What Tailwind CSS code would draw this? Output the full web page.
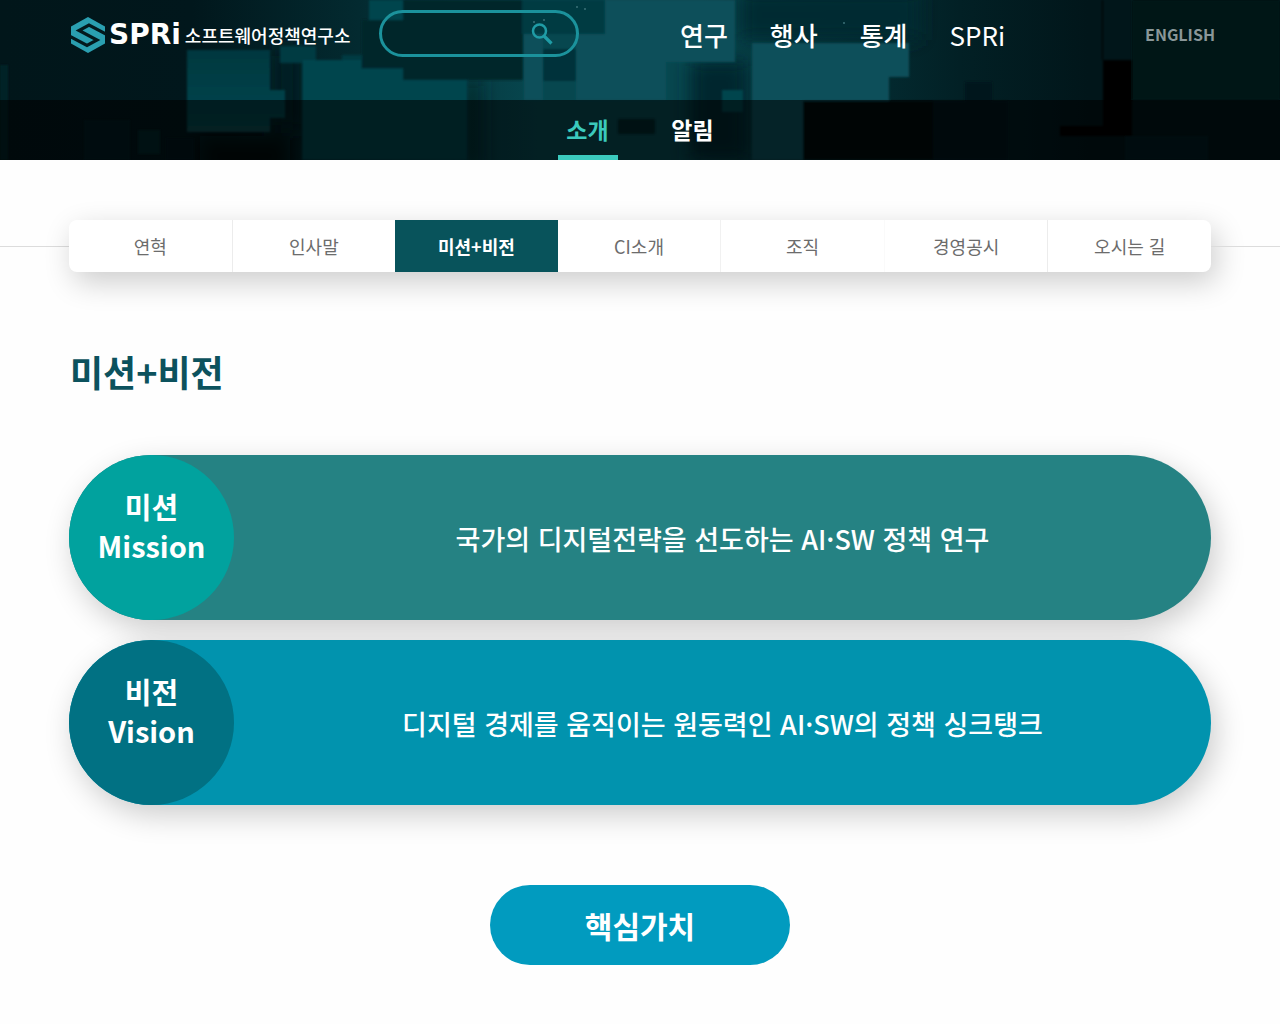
<!DOCTYPE html>
<html lang="ko">
<head>
<meta charset="utf-8">
<meta name="viewport" content="width=device-width, initial-scale=1">
<title>미션+비전 - SPRi 소프트웨어정책연구소</title>
<script src="https://cdn.jsdelivr.net/npm/@tailwindcss/browser@4"></script>
</head>
<body class="min-h-screen bg-[#fefefe] font-['Noto_Sans_CJK_KR',sans-serif]">
<header class="relative isolate overflow-hidden bg-[#02171b] text-white">
  <!-- Header artwork: overlapping blocks -->
  <svg class="absolute inset-0 -z-10 h-full w-full" viewBox="0 0 1280 160" preserveAspectRatio="xMidYMin slice" aria-hidden="true">
    <defs>
      <linearGradient id="base" x1="0" x2="1" y1="0" y2="0">
        <stop offset="0" stop-color="#01161a"/><stop offset=".15" stop-color="#01171c"/><stop offset=".28" stop-color="#032a30"/>
        <stop offset=".42" stop-color="#07474f"/><stop offset=".55" stop-color="#07474f"/><stop offset=".62" stop-color="#04343b"/>
        <stop offset=".75" stop-color="#022025"/><stop offset=".85" stop-color="#01161a"/><stop offset="1" stop-color="#01161a"/>
      </linearGradient>
      <linearGradient id="block" x1="0" x2="0" y1="0" y2="1">
        <stop offset="0" stop-color="#03383f"/><stop offset="1" stop-color="#07474f"/>
      </linearGradient>
      <filter id="soft"><feGaussianBlur stdDeviation="9"/></filter>
      <filter id="edge"><feGaussianBlur stdDeviation="1"/></filter>
    </defs>
    <rect width="1280" height="160" fill="url(#base)"/>
    <g filter="url(#soft)">
      <rect x="272" y="50" width="30" height="80" fill="#021d22"/>
      <rect x="200" y="136" width="90" height="40" fill="#000708"/>
      <rect x="466" y="80" width="14" height="90" fill="#03252b"/>
      <rect x="690" y="60" width="58" height="100" fill="#03282e"/>
      <rect x="740" y="-10" width="180" height="50" fill="#032b31"/>
    </g>
    <g filter="url(#edge)">
    <rect x="0" y="65" width="8" height="95" fill="#022126"/>
    <rect x="84" y="120" width="46" height="40" fill="#021d21"/>
    <rect x="138" y="130" width="22" height="24" fill="#03282c"/>
    <rect x="166" y="138" width="28" height="22" fill="#02191d"/>
    <path d="M187 50h83v40h15v28h-15v14h-83z" fill="url(#block)"/>
    <path d="M280 46h36v14h26v-5h20v13h22v-10h20v14h-42v88h-60v-97h-22z" fill="#043b43"/>
    <path d="M303 60h58v9h106v91H303z" fill="#06444d"/>
    <rect x="369" y="0" width="34" height="20" fill="#06444d"/>
    <rect x="362" y="20" width="42" height="48" fill="#03252b"/>
    <rect x="403" y="0" width="120" height="80" fill="#02252b"/>
    <rect x="522" y="0" width="83" height="34" fill="#043a42"/>
    <rect x="524" y="34" width="19" height="66" fill="#07505a"/>
    <rect x="543" y="49" width="33" height="32" fill="#03333a"/>
    <rect x="605" y="0" width="130" height="62" fill="#07505a"/>
    <rect x="576" y="34" width="90" height="66" fill="#07505a"/>
    <rect x="722" y="90" width="21" height="22" fill="#06444d"/>
    <path d="M752 43h157v34h-20v24h-46v59h-91z" fill="#07505a"/>
    <rect x="618" y="119" width="37" height="15" fill="#02262c"/>
    <rect x="803" y="101" width="130" height="59" fill="#01090c"/>
    <rect x="933" y="101" width="75" height="59" fill="#02171b"/>
    <rect x="965" y="82" width="27" height="78" fill="#02191d"/>
    <rect x="1102" y="0" width="1" height="60" fill="#000b0e"/>
    <path d="M1103 60h29v76h-72v-10h43z" fill="#000304"/>
    <rect x="1132" y="0" width="148" height="100" fill="#011418"/>
    <rect x="1125" y="136" width="83" height="24" fill="#021d24"/>
    </g>
    <g fill="#3b7279"><circle cx="577" cy="7" r="1"/><circle cx="585" cy="9" r="1"/><circle cx="534" cy="22" r="1"/><circle cx="544" cy="20" r="1"/><circle cx="844" cy="23" r="1"/></g>
  </svg>

  <div class="mx-auto flex h-[100px] max-w-[1142px] items-start pt-[10px]">
    <a href="#" class="flex h-[50px] w-[310px] shrink-0 items-center whitespace-nowrap" aria-label="SPRi 소프트웨어정책연구소">
      <svg class="ml-px h-9 w-9 shrink-0" viewBox="0 0 36 36" aria-hidden="true">
        <path d="M18 0 35 9.500V26.500L18 36 1 26.500V9.500Z" fill="#2a9fb0"/>
        <path d="M36 17 19 8 9 13.500 27 23 17 28.500 0 19.500" fill="none" stroke="#03191d" stroke-width="3.200"/>
      </svg>
      <span class="ml-[3px] font-['DejaVu_Sans',sans-serif] text-[28px] leading-none font-bold">SPRi</span>
      <span class="ml-1 text-lg font-medium">소프트웨어정책연구소</span>
    </a>
    <form class="relative shrink-0" role="search">
      <input type="text" aria-label="검색어" class="block h-[47px] w-[200px] rounded-full border-3 border-[#1b929c] bg-transparent pr-16 pl-5 text-base outline-none">
      <button type="button" aria-label="검색" class="absolute top-3 right-6 h-6 w-6">
        <svg viewBox="0 0 24 24" fill="none" stroke="#1f9ca6" aria-hidden="true"><circle cx="8.500" cy="9" r="6.500" stroke-width="2.500"/><path d="m13 14 7.500 7.500" stroke-width="3.200"/></svg>
      </button>
    </form>
    <nav class="ml-[101px] flex gap-[42px] text-[26px] leading-[50px] font-medium whitespace-nowrap" aria-label="주 메뉴">
      <a href="#">연구</a><a href="#">행사</a><a href="#">통계</a><a href="#" class="font-normal">SPRi</a>
    </nav>
    <a href="#" class="-mr-1 ml-auto leading-[48px] font-bold text-[#8a9799]">ENGLISH</a>
  </div>

  <nav class="flex h-[60px] justify-center gap-[45px] bg-black/55 text-[23px] leading-[58px] font-bold whitespace-nowrap" aria-label="하위 메뉴">
    <a href="#" class="w-[60px] border-b-5 border-[#3bcabd] text-center text-[#3bcabd]">소개</a>
    <a href="#" class="w-[60px] text-center">알림</a>
  </nav>
</header>

<main>
  <div class="mt-[60px] flex items-center">
    <div class="h-px flex-1 bg-[#dcdcdc]"></div>
    <nav class="flex h-[52px] w-full max-w-[1142px] rounded-lg bg-white text-center text-lg leading-[52px] whitespace-nowrap text-[#6c6c6c] shadow-[5px_10px_30px_rgba(0,0,0,0.2)]" aria-label="소개 메뉴">
      <a href="#" class="flex-1 border-r border-[#ececec]">연혁</a>
      <a href="#" class="flex-1">인사말</a>
      <a href="#" aria-current="page" class="flex-1 bg-[#08535b] font-bold text-white">미션+비전</a>
      <a href="#" class="flex-1 border-r border-[#f1f1f1]">CI소개</a>
      <a href="#" class="flex-1 border-r border-[#fafafa]">조직</a>
      <a href="#" class="flex-1 border-r border-[#ececec]">경영공시</a>
      <a href="#" class="flex-1">오시는 길</a>
    </nav>
    <div class="h-px flex-1 bg-[#dcdcdc]"></div>
  </div>

  <div class="mx-auto max-w-[1142px] pt-[73px] pb-[59px]">
    <h1 class="px-px text-4xl leading-[52px] font-bold text-[#0c525d]">미션+비전</h1>

    <div class="mt-[58px] flex flex-col gap-5 text-white">
      <section class="flex h-[165px] rounded-full bg-[#258283] shadow-[5px_10px_30px_rgba(0,0,0,0.2)]">
        <h2 class="w-[165px] shrink-0 rounded-full bg-[#01a29e] pt-8 text-center text-[29px] leading-[39px] font-bold">미션<br>Mission</h2>
        <p class="flex-1 text-center text-[27px] leading-[168px] font-medium">국가의 디지털전략을 선도하는 AI·SW 정책 연구</p>
      </section>
      <section class="flex h-[165px] rounded-full bg-[#0193ae] shadow-[5px_10px_30px_rgba(0,0,0,0.2)]">
        <h2 class="w-[165px] shrink-0 rounded-full bg-[#017183] pt-8 text-center text-[29px] leading-[39px] font-bold">비전<br>Vision</h2>
        <p class="flex-1 text-center text-[27px] leading-[168px] font-medium">디지털 경제를 움직이는 원동력인 AI·SW의 정책 싱크탱크</p>
      </section>
    </div>

    <h2 class="mx-auto mt-20 w-[300px] rounded-full bg-[#019bbf] text-center text-3xl leading-[80px] font-bold text-white">핵심가치</h2>
  </div>
</main>
</body>
</html>
